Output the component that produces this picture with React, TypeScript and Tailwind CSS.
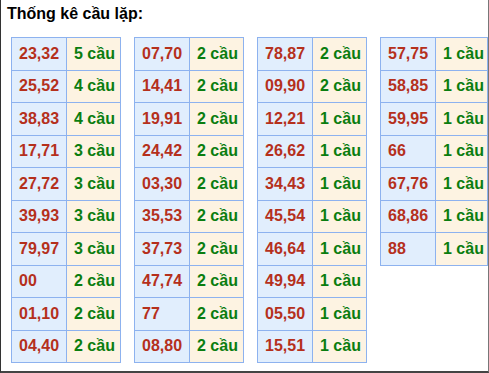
const TABLES: [string, number][][] = [
  [
    ['23,32', 5],
    ['25,52', 4],
    ['38,83', 4],
    ['17,71', 3],
    ['27,72', 3],
    ['39,93', 3],
    ['79,97', 3],
    ['00', 2],
    ['01,10', 2],
    ['04,40', 2],
  ],
  [
    ['07,70', 2],
    ['14,41', 2],
    ['19,91', 2],
    ['24,42', 2],
    ['03,30', 2],
    ['35,53', 2],
    ['37,73', 2],
    ['47,74', 2],
    ['77', 2],
    ['08,80', 2],
  ],
  [
    ['78,87', 2],
    ['09,90', 2],
    ['12,21', 1],
    ['26,62', 1],
    ['34,43', 1],
    ['45,54', 1],
    ['46,64', 1],
    ['49,94', 1],
    ['05,50', 1],
    ['15,51', 1],
  ],
  [
    ['57,75', 1],
    ['58,85', 1],
    ['59,95', 1],
    ['66', 1],
    ['67,76', 1],
    ['68,86', 1],
    ['88', 1],
  ],
];

function StatTable({ rows, last }: { rows: [string, number][]; last?: boolean }) {
  return (
    <div className="flex shrink-0 flex-col self-start border-l border-t border-[#8db2ef]">
      {rows.map(([pair, count]) => (
        <div key={pair} className="flex h-[32.5px]">
          <div className="flex w-[55px] items-center border-b border-r border-[#8db2ef] bg-[#e1eefd] pl-[7px] text-[#b5301c]">
            {pair}
          </div>
          <div
            className={`flex items-center whitespace-nowrap border-b border-r border-[#8db2ef] bg-[#fdf3e2] pl-[7px] text-[#0a7d10] ${
              last ? 'w-[52px]' : 'w-[54px]'
            }`}
          >
            {count} cầu
          </div>
        </div>
      ))}
    </div>
  );
}

export default function App() {
  return (
    <div className="h-[373px] w-[489px] overflow-hidden border-b-2 border-l border-r border-b-[#444] border-l-[#333] border-r-[#777] bg-white font-['Liberation_Sans',Arial,sans-serif]">
      <h3 className="pl-[6px] pt-[5px] text-[16px] font-bold leading-[18px] text-black">
        Thống kê cầu lặp:
      </h3>
      <div className="mt-[14px] flex gap-[13px] pl-[10px] text-[16px] font-bold leading-none">
        {TABLES.map((rows, i) => (
          <StatTable key={i} rows={rows} last={i === TABLES.length - 1} />
        ))}
      </div>
    </div>
  );
}
